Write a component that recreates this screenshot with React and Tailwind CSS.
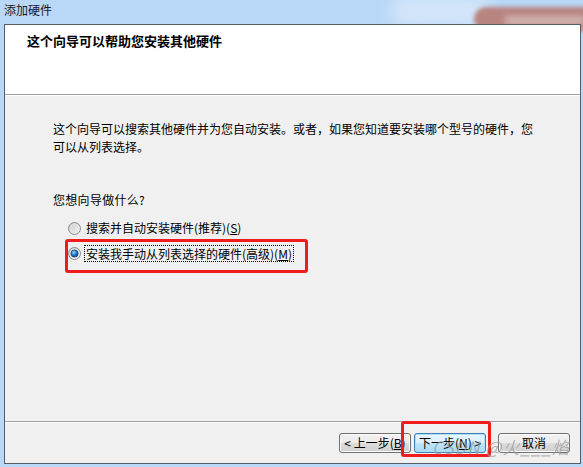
import React from "react";

function Radio({ checked }) {
  return (
    <svg width="13" height="13" viewBox="0 0 13 13" className="shrink-0">
      <defs>
        <linearGradient id={checked ? "rg1" : "rg0"} x1="0" y1="0" x2="1" y2="1">
          <stop offset="0" stopColor="#c8c8c8" />
          <stop offset="1" stopColor="#f8f8f8" />
        </linearGradient>
        <radialGradient id="dot" cx="0.4" cy="0.35" r="0.7">
          <stop offset="0" stopColor="#9ad8f8" />
          <stop offset="0.45" stopColor="#2a8ad4" />
          <stop offset="1" stopColor="#0b3f7a" />
        </radialGradient>
      </defs>
      <circle cx="6.5" cy="6.5" r="6" fill={`url(#${checked ? "rg1" : "rg0"})`} stroke="#8a8a8a" strokeWidth="1" />
      <circle cx="6.5" cy="6.5" r="4.4" fill="none" stroke="#e6e6e6" strokeWidth="0.8" />
      {checked && <circle cx="6.5" cy="6.5" r="3.6" fill="url(#dot)" stroke="#173f66" strokeWidth="0.7" />}
    </svg>
  );
}

function Btn({ children, primary }) {
  return (
    <div
      className={
        "h-[20px] w-[72px] rounded-[3px] border flex items-center justify-center text-[12px] leading-none text-black whitespace-nowrap " +
        (primary
          ? "border-[#3c7fb1] bg-[linear-gradient(#eaf6fd_0%,#d9f0fc_50%,#bee6fd_51%,#a7d9f5_100%)] shadow-[inset_0_0_0_1px_#aee0fa]"
          : "border-[#707070] bg-[linear-gradient(#f2f2f2_0%,#ebebeb_50%,#dddddd_51%,#cfcfcf_100%)] shadow-[inset_0_0_0_1px_#fcfcfc]")
      }
    >
      {children}
    </div>
  );
}

export default function App() {
  return (
    <div
      className="relative w-[583px] h-[467px] overflow-hidden bg-[#b9d7f7] flex flex-col"
      style={{ fontFamily: '"Noto Sans CJK SC", "Liberation Sans", sans-serif' }}
    >
      {/* glass blur decoration on the title bar */}
      <div className="absolute left-[390px] top-[-4px] w-[100px] h-[30px] bg-[#d4e6fa] blur-[8px] rounded-full" />
      <div className="absolute left-[474px] top-[7px] w-[140px] h-[24px] bg-[#b8847f] blur-[2px] rounded-l-[16px]" />
      <div className="absolute left-[505px] top-[16px] w-[80px] h-[9px] bg-[#d2b3b0] blur-[3px]" />

      {/* title bar */}
      <div className="relative h-[24px] shrink-0 pl-[4px] pt-[1px] text-[12px] leading-[18px] text-[#1a1a1a]">
        添加硬件
      </div>

      {/* client area */}
      <div className="relative ml-[4px] mr-[2px] h-[440px] border border-[#555d66] bg-[#f0f0f0] flex flex-col">
        {/* header */}
        <div className="h-[70px] shrink-0 bg-white border-b border-[#a0a0a0] pl-[22px] pt-[7px]">
          <div className="text-[13px] leading-[18px] font-bold text-black">这个向导可以帮助您安装其他硬件</div>
        </div>

        {/* body */}
        <div className="flex-1 border-t border-white border-b border-b-[#a0a0a0] pl-[48px] pt-[24px] text-[12px] leading-[18px] text-black">
          <p className="whitespace-nowrap">
            这个向导可以搜索其他硬件并为您自动安装。或者，如果您知道要安装哪个型号的硬件，您
            <br />
            可以从列表选择。
          </p>
          <p className="mt-[35px] tracking-[0.3px]">您想向导做什么?</p>
          <div className="mt-[10px] ml-[15px] flex flex-col gap-[7px]">
            <div className="flex items-center h-[18px]">
              <Radio />
              <span className="ml-[4px] px-[1px]">
                搜索并自动安装硬件(推荐)(<span className="underline">S</span>)
              </span>
            </div>
            <div className="flex items-center h-[18px]">
              <Radio checked />
              <span className="ml-[3px] px-[1px] border border-dotted border-black leading-[15px]">
                安装我手动从列表选择的硬件(高级)(<span className="underline">M</span>)
              </span>
            </div>
          </div>
        </div>

        {/* footer */}
        <div className="h-[41px] shrink-0 border-t border-white flex justify-end items-start pt-[10px] pr-[10px]">
          <div className="flex">
            <Btn>&lt; 上一步(<span className="underline">B</span>)</Btn>
            <div className="ml-[3px]">
              <Btn primary>
                下一步(<span className="underline">N</span>) &gt;
              </Btn>
            </div>
            <div className="ml-[12px]">
              <Btn>取消</Btn>
            </div>
          </div>
        </div>
      </div>

      {/* annotation overlays */}
      <div className="absolute left-[65px] top-[239px] w-[243px] h-[34px] border-[3px] border-[#f01c1c] rounded-[3px]" />
      <div className="absolute left-[401px] top-[421px] w-[90px] h-[36px] border-[3px] border-[#f01c1c] rounded-[3px]" />

      {/* watermark */}
      <div className="absolute left-[432px] top-[436px] text-[17px] leading-[22px] italic text-[#9a9a9a] opacity-70 whitespace-nowrap tracking-[1px]">
        CSDN @火___焰
      </div>
    </div>
  );
}
